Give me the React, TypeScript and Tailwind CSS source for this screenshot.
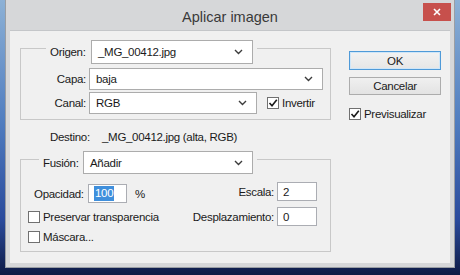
import React from 'react'

// Photoshop "Aplicar imagen" dialog, Windows 8 chrome, on a blurred desktop.

const FONT = { fontFamily: '"Liberation Sans", Arial, sans-serif' }

function Chevron() {
  return (
    <svg width="9" height="6" viewBox="0 0 9 6" className="shrink-0">
      <polyline points="1,1 4.5,4.5 8,1" fill="none" stroke="#3c3c3c" strokeWidth="1.4" />
    </svg>
  )
}

function Combo({ value, w, h }: { value: string; w: string; h: string }) {
  return (
    <div className={`${w} ${h} flex items-center justify-between bg-white border border-[#acacac] pl-[6px] pr-[9px]`}>
      <span>{value}</span>
      <Chevron />
    </div>
  )
}

function Check({ checked }: { checked?: boolean }) {
  return (
    <div className="w-[12px] h-[12px] shrink-0 bg-white border border-[#707070] flex items-center justify-center">
      {checked && (
        <svg width="10" height="10" viewBox="0 0 10 10">
          <polyline points="1.5,5 4,7.8 8.8,1.8" fill="none" stroke="#1a1a1a" strokeWidth="1.6" />
        </svg>
      )}
    </div>
  )
}

function TextBox({ children }: { children: React.ReactNode }) {
  return (
    <div className="w-[40px] h-[19px] bg-white border border-[#abadb3] flex items-center pl-[5px]">
      {children}
    </div>
  )
}

export default function App() {
  return (
    <div
      className="w-[460px] h-[275px] overflow-hidden bg-[linear-gradient(180deg,#8db1d6_0%,#4f7cbf_45%,#2a4a9c_80%,#0d1a45_100%)] text-[11.5px] leading-[14px] tracking-[-0.3px] text-[#1a1a1a]"
      style={FONT}
    >
      <div className="ml-[5px] w-[450px] h-[268px] bg-[#d6d7d9] border-x border-b border-[#9a9ea4] flex flex-col">
        {/* title bar */}
        <div className="relative h-[30px] flex justify-center items-center pt-[3px] shrink-0">
          <span className="text-[14.5px] leading-[18px] tracking-normal text-[#3a3a3a]">Aplicar imagen</span>
          <div className="absolute right-[3px] top-[3px] w-[28px] h-[18px] bg-[#c7504c] flex items-center justify-center">
            <svg width="8" height="8" viewBox="0 0 8 8">
              <path d="M1 1 L7 7 M7 1 L1 7" stroke="#ffffff" strokeWidth="1.6" />
            </svg>
          </div>
        </div>

        {/* client area */}
        <div className="mx-[4px] h-[233px] bg-[#f0f0f0] border-t border-[#c4c6c9] flex">
          {/* left column */}
          <div className="w-[339px] pl-[10px] flex flex-col">
            {/* Origen group */}
            <div className="mt-[17px] w-[311px] h-[72px] border border-[#c8c8c8] flex flex-col">
              <div className="-mt-[9px] ml-[25px] px-[4px] w-fit bg-[#f0f0f0] flex items-center">
                <span className="w-[41px]">Origen:</span>
                <Combo value="_MG_00412.jpg" w="w-[162px]" h="h-[24px]" />
              </div>
              <div className="mt-[4px] flex items-center">
                <span className="w-[65px] text-right">Capa:</span>
                <div className="ml-[3px]">
                  <Combo value="baja" w="w-[234px]" h="h-[22px]" />
                </div>
              </div>
              <div className="mt-[2px] flex items-center">
                <span className="w-[65px] text-right">Canal:</span>
                <div className="ml-[3px]">
                  <Combo value="RGB" w="w-[168px]" h="h-[22px]" />
                </div>
                <div className="ml-[10px]">
                  <Check checked />
                </div>
                <span className="ml-[3px]">Invertir</span>
              </div>
            </div>

            {/* Destino */}
            <div className="mt-[9px] h-[16px] pl-[30px] flex items-center">
              <span className="w-[52px]">Destino:</span>
              <span>_MG_00412.jpg (alta, RGB)</span>
            </div>

            {/* Fusion group */}
            <div className="mt-[14px] w-[311px] h-[93px] border border-[#c8c8c8] flex flex-col">
              <div className="-mt-[9px] ml-[18px] px-[4px] w-fit bg-[#f0f0f0] flex items-center">
                <span className="w-[40px]">Fusión:</span>
                <Combo value="Añadir" w="w-[170px]" h="h-[23px]" />
              </div>
              <div className="flex justify-between">
                <div className="flex flex-col">
                  <div className="mt-[10px] pl-[13px] flex items-center">
                    <span className="w-[54px]">Opacidad:</span>
                    <div className="w-[39px] h-[19px] bg-white border border-[#abadb3] flex items-center pl-[5px]">
                      <span className="bg-[#3f8fdc] text-white px-[1px] leading-[15px]">100</span>
                    </div>
                    <span className="ml-[8px]">%</span>
                  </div>
                  <div className="mt-[7px] pl-[7px] flex items-center">
                    <Check />
                    <span className="ml-[3px]">Preservar transparencia</span>
                  </div>
                  <div className="mt-[6px] pl-[7px] flex items-center">
                    <Check />
                    <span className="ml-[3px]">Máscara...</span>
                  </div>
                </div>
                <div className="mr-[13px] flex flex-col items-end">
                  <div className="mt-[8px] flex items-center">
                    <span>Escala:</span>
                    <div className="ml-[3px]">
                      <TextBox>2</TextBox>
                    </div>
                  </div>
                  <div className="mt-[6px] flex items-center">
                    <span>Desplazamiento:</span>
                    <div className="ml-[3px]">
                      <TextBox>0</TextBox>
                    </div>
                  </div>
                </div>
              </div>
            </div>
          </div>

          {/* right column */}
          <div className="w-[92px] flex flex-col">
            <button className="mt-[20px] h-[19px] border border-[#4f9ad8] bg-[linear-gradient(#f2f2f2,#e6e6e6)] shadow-[inset_0_0_0_1px_#cfe6f8] flex items-center justify-center">
              OK
            </button>
            <button className="mt-[7px] h-[18px] border border-[#acacac] bg-[linear-gradient(#f0f0f0,#e3e3e3)] flex items-center justify-center">
              Cancelar
            </button>
            <div className="mt-[12px] flex items-center">
              <Check checked />
              <span className="ml-[3px]">Previsualizar</span>
            </div>
          </div>
        </div>
      </div>
    </div>
  )
}
